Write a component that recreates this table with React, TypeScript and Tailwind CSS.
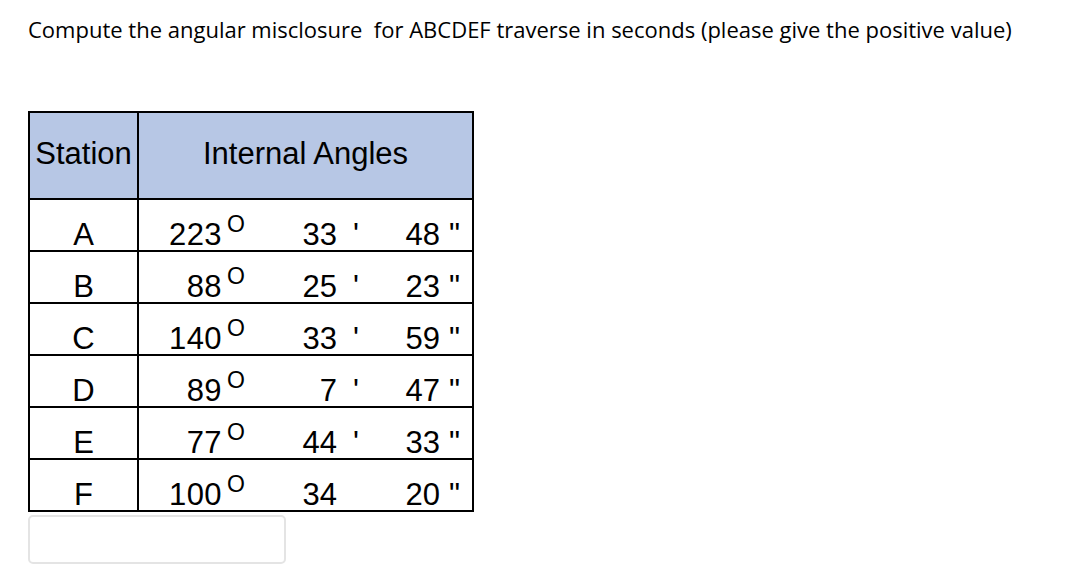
const rows = [
  { station: "A", deg: "223", min: "33", minMark: true, sec: "48" },
  { station: "B", deg: "88", min: "25", minMark: true, sec: "23" },
  { station: "C", deg: "140", min: "33", minMark: true, sec: "59" },
  { station: "D", deg: "89", min: "7", minMark: true, sec: "47" },
  { station: "E", deg: "77", min: "44", minMark: true, sec: "33" },
  { station: "F", deg: "100", min: "34", minMark: false, sec: "20" },
];

export default function App() {
  return (
    <div className="min-h-screen bg-white pl-[28px] pt-[15px]">
      {/* Question */}
      <p className="whitespace-pre font-['Open_Sans',sans-serif] text-[22px] leading-[28px] text-black">
        Compute the angular misclosure  for ABCDEF traverse in seconds (please give the positive value)
      </p>

      {/* Angles table */}
      <div className="mt-[68px] w-[446px] border-2 border-black font-['Liberation_Sans',Arial,sans-serif] text-black">
        <div className="flex h-[87px] border-b-2 border-black bg-[#b7c7e5]">
          <div className="flex w-[109px] items-center justify-center border-r-2 border-black pb-[5px] text-[31px] leading-none">
            Station
          </div>
          <div className="flex flex-1 items-center justify-center pb-[5px] text-[31px] leading-none">
            Internal Angles
          </div>
        </div>

        {rows.map((row, i) => (
          <div
            key={row.station}
            className={`flex ${i < rows.length - 1 ? "h-[52px] border-b-2 border-black" : "h-[50px]"}`}
          >
            <div className="flex w-[109px] items-end justify-center border-r-2 border-black text-[31px] leading-none">
              {row.station}
            </div>
            <div className="flex flex-1 items-end text-[31px] leading-none">
              <span className="w-[83px] text-right tracking-[0.4px]">{row.deg}</span>
              <span className="mb-[14px] w-[31px] pl-[5px] text-[23px] leading-none">O</span>
              <span className="w-[84px] text-right">{row.min}</span>
              <span className="w-[25px] pl-[16px]">{row.minMark ? "'" : ""}</span>
              <span className="w-[78px] text-right">{row.sec}</span>
              <span className="pl-[9px]">"</span>
            </div>
          </div>
        ))}
      </div>

      {/* Answer box */}
      <div className="mt-[3px] h-[49px] w-[258px] rounded-[5px] border-2 border-[#e4e4e4] bg-white" />
    </div>
  );
}
